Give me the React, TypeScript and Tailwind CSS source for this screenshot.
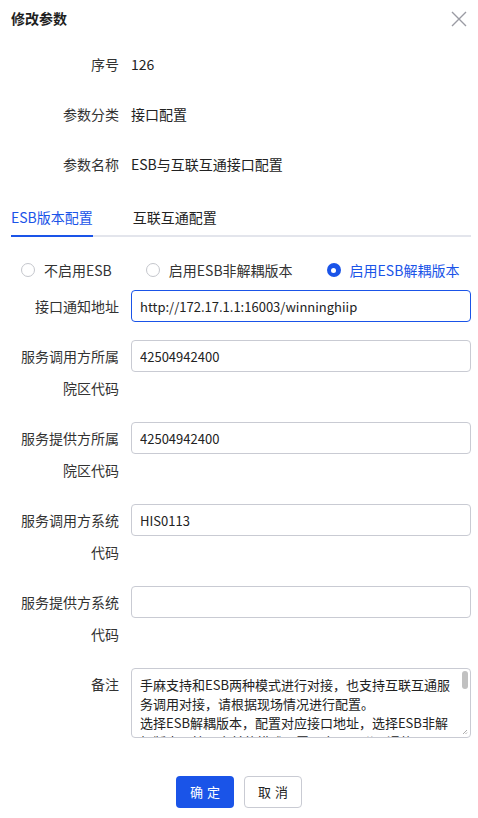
import React, { useState } from 'react'

const font = { fontFamily: '"Noto Sans CJK SC", "Noto Sans", sans-serif' }

const FieldRow = ({ label, value, active }: { label: string; value: string; active?: boolean }) => (
    <div className="flex items-start mb-[18px]">
        <label className="w-[120px] shrink-0 pr-[12px] text-right text-[14px] leading-[32px] text-[#333]">{label}</label>
        <input
            defaultValue={value}
            className={`flex-1 h-[32px] rounded-[4px] border px-2 text-[13px] text-[#222] outline-none ${active ? 'border-[#1a54e8]' : 'border-[#c9cbd3]'}`}
        />
    </div>
)

const Radio = ({ label, checked, onClick }: { label: string; checked: boolean; onClick: () => void }) => (
    <button onClick={onClick} className="flex items-center gap-[9px] text-[14px] leading-[20px]">
        {checked ? (
            <span className="w-[14px] h-[14px] rounded-full bg-[#1a54e8] flex items-center justify-center">
                <span className="w-[5px] h-[5px] rounded-full bg-white" />
            </span>
        ) : (
            <span className="w-[14px] h-[14px] rounded-full border border-[#c4c6cc] bg-white" />
        )}
        <span className={checked ? 'text-[#1a54e8]' : 'text-[#333]'}>{label}</span>
    </button>
)

const remark = '手麻支持和ESB两种模式进行对接，也支持互联互通服务调用对接，请根据现场情况进行配置。\n选择ESB解耦版本，配置对应接口地址，选择ESB非解耦版本，按照之前的模式配置，启用互联互通的需要配置服务地址。'

export default function App() {
    const [mode, setMode] = useState(2)
    const [tab, setTab] = useState(0)

    return (
        <div className="w-[478px] h-[818px] bg-white pl-[11px] pr-[7px]" style={font}>
            {/* Header */}
            <div className="h-[36px] flex items-center justify-between">
                <h2 className="text-[14px] font-bold text-[#1f1f1f]">修改参数</h2>
                <svg width="16" height="16" viewBox="0 0 16 16" className="mr-[4px] mt-[2px]">
                    <path d="M1 1L15 15M15 1L1 15" stroke="#9a9ba3" strokeWidth="1.4" />
                </svg>
            </div>

            {/* Info */}
            <div className="mt-[12px] flex flex-col gap-[18px]">
                {[['序号', '126'], ['参数分类', '接口配置'], ['参数名称', 'ESB与互联互通接口配置']].map(([k, v]) => (
                    <div key={k} className="flex text-[14px] leading-[32px]">
                        <span className="w-[120px] pr-[12px] text-right text-[#333]">{k}</span>
                        <span className="text-[#222]">{v}</span>
                    </div>
                ))}
            </div>

            {/* Tabs */}
            <div className="mt-[26px] flex gap-[40px] border-b-2 border-[#e3e5ec]">
                {['ESB版本配置', '互联互通配置'].map((t, i) => (
                    <button
                        key={t}
                        onClick={() => setTab(i)}
                        className={`-mb-[2px] pb-[7px] text-[14px] leading-[22px] border-b-2 ${tab === i ? 'border-[#1a54e8] text-[#1a54e8]' : 'border-transparent text-[#222]'}`}
                    >
                        {t}
                    </button>
                ))}
            </div>

            {/* Radios */}
            <div className="mt-[23px] pl-[10px] flex gap-[34px]">
                <Radio label="不启用ESB" checked={mode === 0} onClick={() => setMode(0)} />
                <Radio label="启用ESB非解耦版本" checked={mode === 1} onClick={() => setMode(1)} />
                <Radio label="启用ESB解耦版本" checked={mode === 2} onClick={() => setMode(2)} />
            </div>

            <div className="mt-[10px]">
                <FieldRow label="接口通知地址" value="http://172.17.1.1:16003/winninghiip" active />
                <FieldRow label="服务调用方所属院区代码" value="42504942400" />
                <FieldRow label="服务提供方所属院区代码" value="42504942400" />
                <FieldRow label="服务调用方系统代码" value="HIS0113" />
                <FieldRow label="服务提供方系统代码" value="" />
                <div className="flex items-start">
                    <label className="w-[120px] shrink-0 pr-[12px] text-right text-[14px] leading-[32px] text-[#333]">备注</label>
                    <div className="relative flex-1 h-[70px]">
                        <textarea
                            defaultValue={remark}
                            className="block w-full h-full resize-none rounded-[4px] border border-[#c9cbd3] pl-2 pr-[14px] py-[6px] text-[13px] leading-[19px] text-[#222] outline-none"
                        />
                        {/* scrollbar thumb + resize grip */}
                        <span className="absolute right-[3px] top-[3px] w-[6px] h-[18px] rounded-[3px] bg-[#c1c1c1]" />
                        <svg width="6" height="6" viewBox="0 0 6 6" className="absolute right-[3px] bottom-[3px]">
                            <path d="M5 1L1 5M5 3.5L3.5 5" stroke="#999" strokeWidth="0.8" />
                        </svg>
                    </div>
                </div>
            </div>

            {/* Footer */}
            <div className="mt-[38px] flex justify-center gap-[10px] pr-[4px]">
                <button className="w-[58px] h-[32px] rounded-[4px] bg-[#1a54e8] text-white text-[13px] tracking-[4px] pl-[4px]">确定</button>
                <button className="w-[58px] h-[32px] rounded-[4px] border border-[#c9cbd3] text-[#222] text-[13px] tracking-[4px] pl-[4px]">取消</button>
            </div>
        </div>
    )
}
